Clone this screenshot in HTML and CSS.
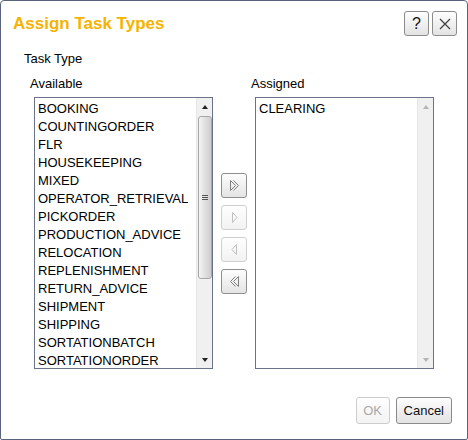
FILE: index.html
```html
<!DOCTYPE html>
<html>
<head>
<meta charset="utf-8">
<link rel="stylesheet" href="styles.css">
</head>
<body>
<div class="dialog">
  <div class="header">
    <div class="title">Assign Task Types</div>
    <div class="tools">
      <button class="tool help">?</button>
      <button class="tool close"><svg width="12" height="12" viewBox="0 0 12 12"><path d="M1 1L11 11M11 1L1 11" stroke="#3a3a3a" stroke-width="1.1" fill="none"/></svg></button>
    </div>
  </div>
  <div class="section-label">Task Type</div>
  <div class="columns">
    <div class="col">
      <div class="col-label">Available</div>
      <div class="listbox">
        <ul class="items">
          <li>BOOKING</li>
          <li>COUNTINGORDER</li>
          <li>FLR</li>
          <li>HOUSEKEEPING</li>
          <li>MIXED</li>
          <li>OPERATOR_RETRIEVAL</li>
          <li>PICKORDER</li>
          <li>PRODUCTION_ADVICE</li>
          <li>RELOCATION</li>
          <li>REPLENISHMENT</li>
          <li>RETURN_ADVICE</li>
          <li>SHIPMENT</li>
          <li>SHIPPING</li>
          <li>SORTATIONBATCH</li>
          <li>SORTATIONORDER</li>
        </ul>
        <div class="scrollbar">
          <div class="arrow up"></div>
          <div class="track">
            <div class="thumb"><div class="grip"></div></div>
          </div>
          <div class="arrow down"></div>
        </div>
      </div>
    </div>
    <div class="mover">
      <button class="mbtn"><svg width="11" height="11" viewBox="0 0 11 11"><path d="M1.5 0.5L6.5 5.5L1.5 10.5Z M4.5 0.5L9.5 5.5L4.5 10.5" stroke="#808080" fill="none" stroke-width="1"/></svg></button>
      <button class="mbtn off"><svg width="11" height="11" viewBox="0 0 11 11"><path d="M3.5 0.5L8 5.5L3.5 10.5Z" stroke="#c0c0c0" fill="none" stroke-width="1"/></svg></button>
      <button class="mbtn off"><svg width="11" height="11" viewBox="0 0 11 11"><path d="M7.5 0.5L3 5.5L7.5 10.5Z" stroke="#c0c0c0" fill="none" stroke-width="1"/></svg></button>
      <button class="mbtn"><svg width="11" height="11" viewBox="0 0 11 11"><path d="M9.5 0.5L4.5 5.5L9.5 10.5Z M6.5 0.5L1.5 5.5L6.5 10.5" stroke="#808080" fill="none" stroke-width="1"/></svg></button>
    </div>
    <div class="col">
      <div class="col-label">Assigned</div>
      <div class="listbox">
        <ul class="items">
          <li>CLEARING</li>
        </ul>
        <div class="scrollbar disabled">
          <div class="arrow up"></div>
          <div class="track"></div>
          <div class="arrow down"></div>
        </div>
      </div>
    </div>
  </div>
  <div class="footer">
    <button class="btn off">OK</button>
    <button class="btn">Cancel</button>
  </div>
</div>
</body>
</html>
```

FILE: styles.css
```css
* { box-sizing: border-box; }
html, body { margin: 0; padding: 0; background: #ffffff; }
body { font-family: "Liberation Sans", Arial, sans-serif; font-size: 13px; color: #000; }

.dialog {
  width: 468px;
  height: 440px;
  border: 1px solid #59647c;
  border-radius: 4px 4px 2px 2px;
  background: #fff;
  display: flex;
  flex-direction: column;
}

.header {
  display: flex;
  justify-content: space-between;
  align-items: flex-start;
  padding: 10px 10px 0 12px;
}
.title {
  margin-top: 3px;
  font-size: 17px;
  line-height: 20px;
  font-weight: bold;
  color: #f6b300;
}
.tools { display: flex; gap: 3px; }
.tool {
  width: 25px;
  height: 25px;
  padding: 0;
  border: 1px solid #8c8c8c;
  border-radius: 3px;
  background: linear-gradient(#fefefe, #e3e3e3);
  font-family: "Liberation Sans", Arial, sans-serif;
  font-size: 16px;
  line-height: 22px;
  color: #111;
  display: flex;
  align-items: center;
  justify-content: center;
}

.section-label {
  margin: 15px 0 0 23px;
  line-height: 16px;
}

.columns {
  display: flex;
  align-items: flex-end;
  padding-left: 33px;
  margin-top: 9px;
}
.col { display: flex; flex-direction: column; }
.col-label {
  line-height: 16px;
  margin-left: -4px;
  margin-bottom: 5px;
}
.listbox {
  width: 179px;
  height: 272px;
  border: 1px solid #6a7289;
  display: flex;
}
.items {
  list-style: none;
  margin: 0;
  padding: 2px 0 0 3px;
  flex: 1;
}
.items li {
  line-height: 18px;
  height: 18px;
  white-space: nowrap;
}

.scrollbar {
  width: 16px;
  background: #f0f0f0;
  display: flex;
  flex-direction: column;
  border-left: 1px solid #e6e6e6;
}
.arrow {
  height: 17px;
  display: flex;
  align-items: center;
  justify-content: center;
}
.arrow::before {
  content: "";
  width: 0;
  height: 0;
  border-left: 3.5px solid transparent;
  border-right: 3.5px solid transparent;
}
.arrow.up::before { border-bottom: 4px solid #222; }
.arrow.down::before { border-top: 4px solid #222; }
.disabled .arrow.up::before { border-bottom-color: #b4b4b4; }
.disabled .arrow.down::before { border-top-color: #b4b4b4; }
.track { flex: 1; padding: 0 0 0 1px; }
.thumb {
  height: 163px;
  margin-top: 1px;
  width: 14px;
  border: 1px solid #a6a6a6;
  border-radius: 3px;
  background: linear-gradient(to right, #f4f4f4, #dcdcdc 60%, #cfcfcf);
  display: flex;
  align-items: center;
  justify-content: center;
}
.grip {
  width: 6px;
  height: 5px;
  border-top: 1px solid #555;
  border-bottom: 1px solid #555;
  position: relative;
}
.grip::after {
  content: "";
  position: absolute;
  left: 0;
  right: 0;
  top: 1px;
  border-top: 1px solid #555;
}

.mover {
  width: 42px;
  height: 272px;
  display: flex;
  flex-direction: column;
  align-items: center;
  justify-content: center;
  gap: 7px;
}
.mbtn {
  width: 26px;
  height: 25px;
  padding: 0;
  border: 1px solid #8f8f8f;
  border-radius: 3px;
  background: linear-gradient(#fdfdfd, #e4e4e4);
  display: flex;
  align-items: center;
  justify-content: center;
}
.mbtn.off {
  border-color: #cfcfcf;
  background: linear-gradient(#fefefe, #f2f2f2);
}

.footer {
  margin-top: auto;
  display: flex;
  justify-content: flex-end;
  gap: 6px;
  padding: 0 15px 15px 0;
}
.btn {
  height: 27px;
  padding: 0 7px;
  border: 1px solid #8a8a8a;
  border-radius: 3px;
  background: linear-gradient(#fdfdfd, #e3e3e3);
  font-family: "Liberation Sans", Arial, sans-serif;
  font-size: 13px;
  color: #111;
}
.btn.off {
  width: 34px;
  padding: 0;
  border-color: #cdcdcd;
  background: linear-gradient(#fefefe, #f3f3f3);
  color: #a8a8a8;
}
```
